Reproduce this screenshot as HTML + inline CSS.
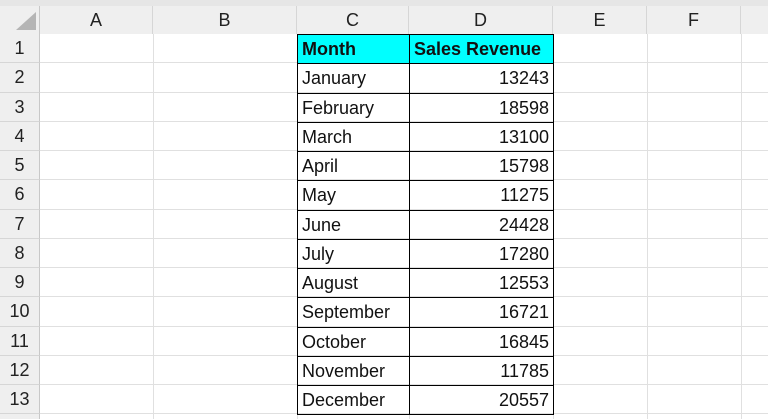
<!DOCTYPE html><html><head><style>
body{margin:0;width:768px;height:419px;overflow:hidden;background:#fff;font-family:"Liberation Sans",sans-serif;position:relative}
.d{position:absolute;box-sizing:border-box}
.h{background:#efefef;color:#222;font-size:18px;text-align:center}
.c{font-size:18px;color:#111;white-space:nowrap;padding:0 4px;line-height:29px}
</style></head><body>
<div class="d" style="left:0;top:0;width:768px;height:6px;background:#e6e6e6"></div>
<div class="d" style="left:0;top:6px;width:768px;height:28px;background:#efefef;border-bottom:1px solid #c8c8c8"></div>
<div class="d" style="left:0;top:6px;width:40px;height:413px;background:#efefef;border-right:1px solid #c8c8c8"></div>
<svg class="d" style="left:14px;top:10px" width="24" height="22"><polygon points="22,2 22,20 2,20" fill="#b5b5b5"/></svg>
<div id="g"></div>
<script>
var cols=[40,153,297,409,553,647,741,800],names=["A","B","C","D","E","F",""];
var h="";
for(var i=0;i<7;i++){h+='<div class="d h" style="left:'+cols[i]+'px;top:6px;width:'+(cols[i+1]-cols[i])+'px;height:28px;line-height:28px;border-right:1px solid #d6d6d6">'+names[i]+'</div>';}
for(var r=0;r<13;r++){var y=34+r*29.25;
h+='<div class="d h" style="left:0;top:'+y+'px;width:40px;height:29.25px;line-height:29px;border-bottom:1px solid #d6d6d6;border-right:1px solid #c8c8c8">'+(r+1)+'</div>';
h+='<div class="d" style="left:40px;top:'+(y+28.25)+'px;width:728px;height:1px;background:#e0e0e0"></div>';}
for(var i=1;i<7;i++)h+='<div class="d" style="left:'+cols[i]+'px;top:34px;width:1px;height:385px;background:#e0e0e0"></div>';
var m=["January","February","March","April","May","June","July","August","September","October","November","December"];
var v=[13243,18598,13100,15798,11275,24428,17280,12553,16721,16845,11785,20557];
h+='<div class="d c" style="left:297px;top:34px;width:113px;height:30px;background:#00ffff;border:1.5px solid #000;font-weight:bold">Month</div>';
h+='<div class="d c" style="left:409px;top:34px;width:145px;height:30px;background:#00ffff;border:1.5px solid #000;font-weight:bold">Sales Revenue</div>';
for(var r=0;r<12;r++){var y=34+(r+1)*29.25;
h+='<div class="d c" style="left:297px;top:'+y+'px;width:113px;height:30.25px;border:1.5px solid #000">'+m[r]+'</div>';
h+='<div class="d c" style="left:409px;top:'+y+'px;width:145px;height:30.25px;border:1.5px solid #000;text-align:right">'+v[r]+'</div>';}
document.getElementById("g").innerHTML=h;
</script>
</body></html>
